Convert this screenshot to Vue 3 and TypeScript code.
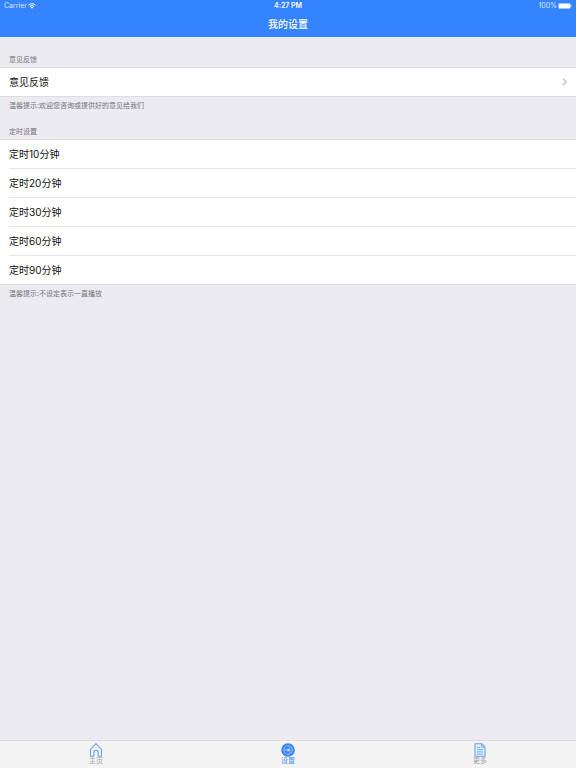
<script setup lang="ts">
import { ref } from 'vue'

const timers: number[] = [10, 20, 30, 60, 90]
const selected = ref<number | null>(null)

function pick(minutes: number): void {
  selected.value = selected.value === minutes ? null : minutes
}
</script>

<template>
  <div class="screen">
    <header class="top">
      <div class="status">
        <span class="carrier">
          Carrier
          <svg class="wifi" viewBox="0 0 16 12" aria-hidden="true">
            <path d="M1 4.2a10.2 10.2 0 0 1 14 0M3.6 7a6.5 6.5 0 0 1 8.8 0" fill="none" stroke="currentColor" stroke-width="2" />
            <path d="M5.4 8.8a4 4 0 0 1 5.2 0L8 11.6z" fill="currentColor" />
          </svg>
        </span>
        <span class="clock">4:27 PM</span>
        <span class="power">
          100%
          <svg class="battery" viewBox="0 0 28 12" aria-hidden="true">
            <rect x="1" y="1" width="24" height="10" rx="2" fill="currentColor" />
            <path d="M26 4c1.6.5 1.6 3.5 0 4z" fill="currentColor" />
          </svg>
        </span>
      </div>
      <h1 class="title">我的设置</h1>
    </header>

    <main class="content">
      <section class="group">
        <h2 class="caption first">意见反馈</h2>
        <div class="list">
          <button class="row" type="button">
            <span>意见反馈</span>
            <svg class="chevron" viewBox="0 0 5 8" aria-hidden="true">
              <path d="M.7.7 4.2 4 .7 7.3" fill="none" stroke="currentColor" stroke-width="1.1" />
            </svg>
          </button>
        </div>
        <p class="hint">温馨提示:欢迎您咨询或提供好的意见给我们</p>
      </section>

      <section class="group">
        <h2 class="caption">定时设置</h2>
        <div class="list">
          <button
            v-for="m in timers"
            :key="m"
            class="row"
            type="button"
            :aria-pressed="selected === m"
            @click="pick(m)"
          >
            <span>定时{{ m }}分钟</span>
          </button>
        </div>
        <p class="hint">温馨提示:不设定表示一直播放</p>
      </section>
    </main>

    <nav class="tabs">
      <a class="tab" href="#home">
        <svg class="icon" viewBox="0 0 14 14" aria-hidden="true">
          <path d="M1.5 6.3 7 .7l5.500 5.600v7H9.200V9.500a2.200 2.200 0 0 0-4.400 0v3.800H1.500z" fill="none" stroke="currentColor" stroke-width="1.1" stroke-linejoin="round" />
        </svg>
        <span class="name">主页</span>
      </a>
      <a class="tab active" href="#settings" aria-current="page">
        <svg class="icon" viewBox="0 0 14 14" aria-hidden="true">
          <circle cx="7" cy="7" r="6.8" fill="currentColor" />
          <circle cx="7" cy="7" r="4.3" fill="none" stroke="#a9ccfb" stroke-width=".9" stroke-dasharray="3.6 .9" />
          <path d="M7 7H3M7 7l2.500-3.200M7 7l2.500 3.200" fill="none" stroke="#a9ccfb" stroke-width=".8" />
          <path d="M6.300 5.700 10.500 7l-4.200 1.300z" fill="#dceaff" />
        </svg>
        <span class="name">设置</span>
      </a>
      <a class="tab" href="#more">
        <svg class="icon" viewBox="0 0 14 14" aria-hidden="true">
          <path d="M2 .7h6.800L12 3.900v9.400H2z" fill="#e3eefc" stroke="currentColor" stroke-width="1.1" stroke-linejoin="round" />
          <path d="M8.600.9v3.200H12" fill="none" stroke="currentColor" stroke-width="1" />
          <path d="M4 4.500h3M4 6.700h6M4 8.900h6M4 11.100h6" fill="none" stroke="currentColor" stroke-width=".9" />
        </svg>
        <span class="name">更多</span>
      </a>
    </nav>
  </div>
</template>

<style>
body {
  margin: 0;
}
</style>

<style scoped>
.screen {
  display: flex;
  flex-direction: column;
  min-height: 100vh;
  background: #ebebf1;
  color: #111;
  font-family: Inter, "Noto Sans CJK SC", sans-serif;
}

.top {
  background: #3483ff;
  color: #fff;
}

.status {
  display: grid;
  grid-template-columns: 1fr auto 1fr;
  align-items: center;
  height: 12px;
  padding: 0 4px;
  font-size: 7px;
  line-height: 12px;
}

.carrier,
.power {
  display: flex;
  align-items: center;
  gap: 1px;
  color: #d9e8ff;
}

.power {
  justify-content: flex-end;
}

.clock {
  font-weight: 600;
}

.wifi {
  width: 8px;
  height: 6px;
  color: #fff;
}

.battery {
  width: 14px;
  height: 6px;
  color: #fff;
}

.title {
  margin: 0;
  padding-bottom: 1px;
  font-size: 10px;
  font-weight: 500;
  line-height: 24px;
  text-align: center;
}

.content {
  flex: 1;
}

.caption,
.hint {
  margin: 0;
  padding: 0 9px;
  color: #747479;
  font-size: 7px;
  font-weight: 400;
}

.caption {
  line-height: 14px;
}

.caption.first {
  padding-top: 16px;
}

.hint {
  padding-bottom: 9px;
  line-height: 20px;
}

.list {
  background: #fff;
  box-shadow: inset 0 1px #dcdce0, 0 1px #dcdce0;
}

.row {
  position: relative;
  display: flex;
  align-items: center;
  justify-content: space-between;
  width: 100%;
  height: 29px;
  margin: 0;
  padding: 0 9px;
  border: 0;
  background: none;
  color: inherit;
  font: inherit;
  font-size: 10px;
  line-height: 28px;
  text-align: left;
}

.row + .row::before {
  position: absolute;
  top: 0;
  right: 0;
  left: 9px;
  height: 1px;
  background: #e6e6e9;
  content: "";
}

.chevron {
  width: 5px;
  height: 8px;
  color: #b9b9be;
}

.tabs {
  display: grid;
  grid-template-columns: repeat(3, 1fr);
  border-top: 1px solid #dcdce0;
  background: #f4f4f5;
}

.tab {
  display: flex;
  flex-direction: column;
  align-items: center;
  padding: 2px 0 3px;
  color: #6ba5ea;
  text-decoration: none;
}

.icon {
  width: 14px;
  height: 14px;
}

.name {
  color: #a2a2a6;
  font-size: 7px;
  line-height: 8px;
}

.active {
  color: #3a86ee;
}

.active .name {
  color: #4a92f5;
}
</style>
